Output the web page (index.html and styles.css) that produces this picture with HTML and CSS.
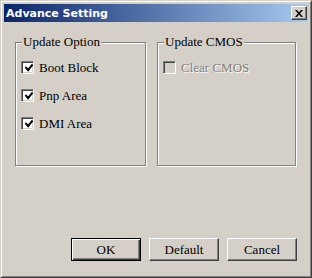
FILE: index.html
```html
<!DOCTYPE html>
<html>
<head>
    <title>Advance Setting</title>
    <meta name="viewport" content="width=device-width, initial-scale=1.0">
    <link rel="stylesheet" href="styles.css">
</head>

<body>

<div class="window">
    <div class="titlebar">
        <span class="title">Advance Setting</span>
        <button class="close-btn">
            <svg width="8" height="7" viewBox="0 0 8 7">
                <path d="M0 0h2l2 2.5 2-2.5h2l-3 3.5 3 3.5h-2l-2-2.5-2 2.5h-2l3-3.5z" fill="#000"/>
            </svg>
        </button>
    </div>

    <div class="content">
        <div class="groups">
            <div class="group group-left">
                <span class="group-title">Update Option</span>
                <label class="check"><span class="box checked"></span>Boot Block</label>
                <label class="check"><span class="box checked"></span>Pnp Area</label>
                <label class="check"><span class="box checked"></span>DMI Area</label>
            </div>
            <div class="group group-right">
                <span class="group-title">Update CMOS</span>
                <label class="check disabled"><span class="box"></span>Clear CMOS</label>
            </div>
        </div>

        <div class="buttons">
            <button class="btn btn-default">OK</button>
            <button class="btn">Default</button>
            <button class="btn">Cancel</button>
        </div>
    </div>
</div>

</body>
</html>
```

FILE: styles.css
```css
body {
    margin: 0;
    padding: 0;
    background: #d4d0c8;
    font-family: "Liberation Serif", serif;
    font-size: 13px;
}

.window {
    width: 312px;
    height: 278px;
    box-sizing: border-box;
    border: 1px solid;
    border-color: #d4d0c8 #404040 #404040 #d4d0c8;
    box-shadow: inset 1px 1px #fff, inset -1px -1px #808080;
    padding: 3px;
    background: #d4d0c8;
    display: flex;
    flex-direction: column;
}

.titlebar {
    height: 18px;
    background: linear-gradient(to right, #0a246a, #a6caf0);
    display: flex;
    align-items: center;
    justify-content: space-between;
    padding: 0 1px 0 2px;
}

.title {
    color: white;
    font-family: "DejaVu Sans", sans-serif;
    font-weight: bold;
    font-size: 11px;
}

.close-btn {
    width: 16px;
    height: 14px;
    padding: 0;
    background: #d4d0c8;
    border: 1px solid;
    border-color: #fff #404040 #404040 #fff;
    box-shadow: inset -1px -1px #808080;
    display: flex;
    align-items: center;
    justify-content: center;
}

.content {
    flex: 1;
    padding: 20px 11px 13px 11px;
    display: flex;
    flex-direction: column;
    justify-content: space-between;
}

.groups {
    display: grid;
    grid-template-columns: 131px 139px;
    column-gap: 11px;
}

.group {
    position: relative;
    height: 104px;
    border: 1px solid #808080;
    box-shadow: inset 1px 1px #fff, 1px 1px #fff;
    padding: 18px 0 0 5px;
    display: flex;
    flex-direction: column;
    gap: 15px;
}

.group-title {
    position: absolute;
    top: -9px;
    left: 6px;
    padding: 0 1px;
    background: #d4d0c8;
    line-height: 16px;
}

.check {
    display: flex;
    align-items: center;
    height: 13px;
    gap: 5px;
}

.box {
    width: 9px;
    height: 9px;
    background: #fff;
    border: 1px solid;
    border-color: #808080 #fff #fff #808080;
    box-shadow: inset 1px 1px #404040, inset -1px -1px #d4d0c8;
    padding: 1px;
    position: relative;
}

.box.checked::after {
    content: "";
    position: absolute;
    left: 3px;
    top: 2px;
    width: 6px;
    height: 3px;
    border-left: 2px solid #000;
    border-bottom: 2px solid #000;
    transform: rotate(-50deg) skewX(-8deg);
    transform-origin: center;
}

.check.disabled {
    color: #808080;
    text-shadow: 1px 1px #fff;
}

.check.disabled .box {
    background: #d4d0c8;
}

.buttons {
    display: flex;
    justify-content: flex-end;
    gap: 8px;
}

.btn {
    width: 70px;
    height: 23px;
    font-family: "Liberation Serif", serif;
    font-size: 13px;
    color: #000;
    background: #d4d0c8;
    border: 1px solid;
    border-color: #fff #404040 #404040 #fff;
    box-shadow: inset -1px -1px #808080;
    padding: 0;
}

.btn-default {
    border: 1px solid #000;
    box-shadow: inset 1px 1px #fff, inset -1px -1px #404040, inset -2px -2px #808080;
}
```
